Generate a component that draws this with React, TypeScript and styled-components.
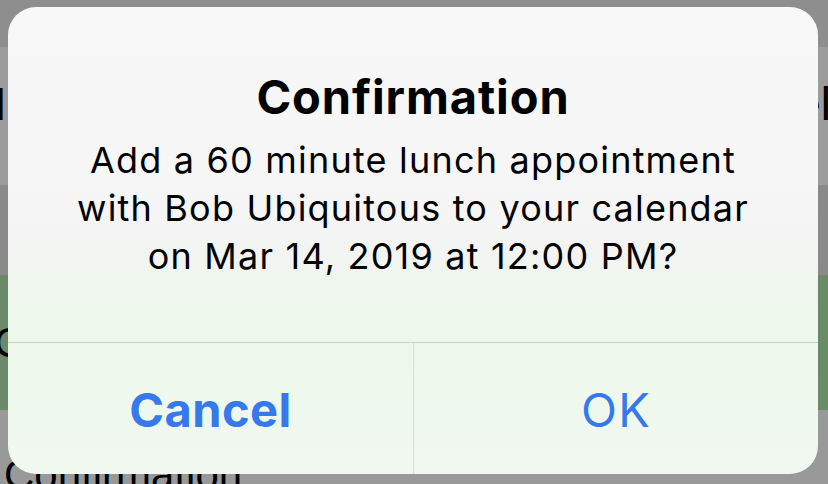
import React from "react";
import styled, { createGlobalStyle } from "styled-components";

const Global = createGlobalStyle`
  html, body { margin: 0; padding: 0; }
  body { width: 828px; height: 484px; overflow: hidden; background: #9a9a9a; }
  #root { width: 828px; height: 484px; }
`;

const Screen = styled.div`
  position: relative;
  width: 828px;
  height: 484px;
  overflow: hidden;
  display: flex;
  flex-direction: column;
  font-family: "Liberation Sans", Arial, sans-serif;
  color: #000;
`;

const Band = styled.div<{ $h: number; $bg: string; $align?: string }>`
  height: ${(p) => p.$h}px;
  flex: none;
  background: ${(p) => p.$bg};
  display: flex;
  align-items: ${(p) => p.$align || "center"};
  justify-content: space-between;
  overflow: hidden;
`;

const BgText = styled.span<{ $size: number }>`
  font-size: ${(p) => p.$size}px;
  line-height: 1;
  white-space: nowrap;
  color: #000;
`;

const LeftText = styled(BgText)`
  margin-left: -6px;
`;

const RightText = styled(BgText)`
  margin-right: -3px;
`;

const RowText = styled.div`
  width: 100%;
  display: flex;
  justify-content: space-between;
  margin-bottom: 58px;
`;

const BottomText = styled(BgText)`
  margin-left: 4px;
  margin-top: 44px;
`;

const Dialog = styled.div`
  position: absolute;
  left: 8px;
  top: 7px;
  width: 810px;
  height: 467px;
  border-radius: 28px;
  overflow: hidden;
  display: flex;
  flex-direction: column;
  background: linear-gradient(
    180deg,
    #f8f8f8 0px,
    #f6f6f6 170px,
    #f2f4f2 250px,
    #edf7eb 300px,
    #eef8ed 400px,
    #f1f8f1 467px
  );
  font-family: Inter, "Noto Sans", sans-serif;
`;

const Body = styled.div`
  flex: none;
  height: 335px;
  box-sizing: border-box;
  padding: 62px 20px 0;
  display: flex;
  flex-direction: column;
  align-items: center;
  text-align: center;
`;

const Title = styled.div`
  font-size: 47px;
  line-height: 56px;
  font-weight: 700;
  letter-spacing: 0.9px;
  color: #000;
`;

const Message = styled.div`
  margin-top: 11px;
  display: flex;
  flex-direction: column;
  align-items: center;
  font-size: 36px;
  line-height: 48px;
  font-weight: 400;
  letter-spacing: 1.2px;
  color: #000;
`;

const MessageLine = styled.span`
  white-space: nowrap;
`;

const Actions = styled.div`
  flex: 1;
  display: grid;
  grid-template-columns: 1fr 1fr;
  border-top: 1px solid #b8dcb5;
`;

const Action = styled.button<{ $bold?: boolean }>`
  appearance: none;
  background: transparent;
  border: none;
  margin: 0;
  padding: 0;
  font-family: inherit;
  font-size: 47px;
  line-height: 56px;
  font-weight: ${(p) => (p.$bold ? 700 : 400)};
  letter-spacing: ${(p) => (p.$bold ? 0.5 : 1.2)}px;
  color: #3679ec;
  display: flex;
  align-items: center;
  justify-content: center;
  padding-top: 2px;
  & + & {
    border-left: 1px solid #cce4c9;
  }
`;

const lines = [
  "Add a 60 minute lunch appointment",
  "with Bob Ubiquitous to your calendar",
  "on Mar 14, 2019 at 12:00 PM?",
];

export default function App() {
  return (
    <Screen>
      <Global />
      <Band $h={47} $bg="#8e8e8e" />
      <Band $h={138} $bg="#9c9c9c" $align="flex-end">
        <RowText>
          <LeftText $size={46}>I</LeftText>
          <RightText $size={46}>el</RightText>
        </RowText>
      </Band>
      <Band $h={90} $bg="#8a8a8a" />
      <Band $h={135} $bg="#6b8a69">
        <LeftText $size={42}>C</LeftText>
      </Band>
      <Band $h={74} $bg="#999999" $align="flex-start">
        <BottomText $size={42}>Confirmation</BottomText>
      </Band>

      <Dialog role="alertdialog">
        <Body>
          <Title>Confirmation</Title>
          <Message>
            {lines.map((l) => (
              <MessageLine key={l}>{l}</MessageLine>
            ))}
          </Message>
        </Body>
        <Actions>
          <Action $bold>Cancel</Action>
          <Action>OK</Action>
        </Actions>
      </Dialog>
    </Screen>
  );
}
